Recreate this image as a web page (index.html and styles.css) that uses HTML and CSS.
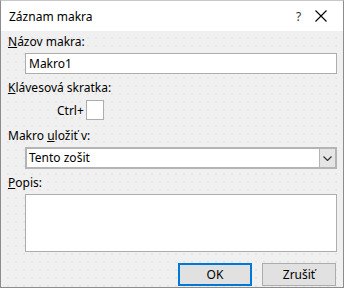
FILE: index.html
```html
<!DOCTYPE html>
<html>
<head>
    <meta charset="UTF-8">
    <title>Záznam makra</title>
    <link rel="stylesheet" href="styles.css">
</head>
<body>
    <div class="dialog">
        <div class="titlebar">
            <span class="title">Záznam makra</span>
            <span class="help">?</span>
            <span class="close">
                <svg width="12" height="12" viewBox="0 0 12 12">
                    <path d="M0.5 0.5 L11.5 11.5 M11.5 0.5 L0.5 11.5" stroke="#000" stroke-width="1.1" fill="none"/>
                </svg>
            </span>
        </div>

        <div class="content">
            <div class="label"><u>N</u>ázov makra:</div>
            <div class="field textbox">Makro1</div>

            <div class="label gap"><u>K</u>lávesová skratka:</div>
            <div class="shortcut">
                <span>Ctrl+</span>
                <span class="keybox"></span>
            </div>

            <div class="label gap">Makro <u>u</u>ložiť v:</div>
            <div class="field combo">
                <span class="combo-text">Tento zošit</span>
                <span class="combo-btn">
                    <svg width="9" height="5" viewBox="0 0 9 5">
                        <path d="M0.5 0.5 L4.5 4.5 L8.5 0.5" stroke="#333" stroke-width="1.2" fill="none"/>
                    </svg>
                </span>
            </div>

            <div class="label gap"><u>P</u>opis:</div>
            <div class="field memo"></div>

            <div class="buttons">
                <button class="btn default">OK</button>
                <button class="btn">Zrušiť</button>
            </div>
        </div>
    </div>
</body>
</html>
```

FILE: styles.css
```css
body {
    margin: 0;
    padding: 0;
    font-family: "Noto Sans", "Open Sans", sans-serif;
    font-size: 12px;
    color: #000;
}

.dialog {
    width: 344px;
    height: 288px;
    box-sizing: border-box;
    border: 1px solid #8c8c8c;
    border-top-color: #c8c8c8;
    background-color: #f0f0f0;
    background-image: radial-gradient(circle, #e0e0e0 0.6px, transparent 0.9px);
    background-size: 8px 8px;
    background-position: 3px 1px;
    display: flex;
    flex-direction: column;
}

.titlebar {
    height: 30px;
    background-color: #fff;
    display: flex;
    align-items: center;
    padding-left: 8px;
}

.title {
    flex: 1;
    font-size: 12px;
}

.help {
    width: 10px;
    margin-right: 9px;
    font-size: 12px;
    color: #333;
}

.close {
    width: 12px;
    height: 12px;
    margin-right: 16px;
    display: flex;
}

.content {
    padding: 3px 6px 0 7px;
    display: flex;
    flex-direction: column;
}

.label {
    line-height: 16px;
    height: 16px;
}

.label.gap {
    margin-top: 6px;
}

.field {
    margin-left: 17px;
    box-sizing: border-box;
    background-color: #fff;
    border: 1px solid #adadad;
}

.textbox {
    margin-top: 3px;
    height: 21px;
    line-height: 19px;
    padding-left: 3px;
}

.shortcut {
    display: flex;
    align-items: center;
    margin-top: 2px;
    margin-left: 49px;
    height: 24px;
}

.shortcut span:first-child {
    margin-right: 2px;
}

.keybox {
    width: 18px;
    height: 20px;
    box-sizing: border-box;
    background-color: #fff;
    border: 1px solid #adadad;
}

.combo {
    margin-top: 3px;
    height: 22px;
    display: flex;
    border-width: 2px;
    border-color: #b4b4b4;
}

.combo-text {
    flex: 1;
    line-height: 18px;
    padding-left: 2px;
}

.combo-btn {
    width: 15px;
    background-color: #e5e5e5;
    border-left: 1px solid #b4b4b4;
    display: flex;
    align-items: center;
    justify-content: center;
}

.memo {
    margin-top: 3px;
    height: 58px;
}

.buttons {
    display: flex;
    justify-content: flex-end;
    gap: 10px;
    margin-top: 11px;
    padding-right: 1px;
}

.btn {
    width: 74px;
    height: 23px;
    box-sizing: border-box;
    background-color: #e1e1e1;
    border: 1px solid #adadad;
    font-family: inherit;
    font-size: 12px;
    color: #000;
    padding: 0;
}

.btn.default {
    border: 2px solid #0078d7;
}
```
